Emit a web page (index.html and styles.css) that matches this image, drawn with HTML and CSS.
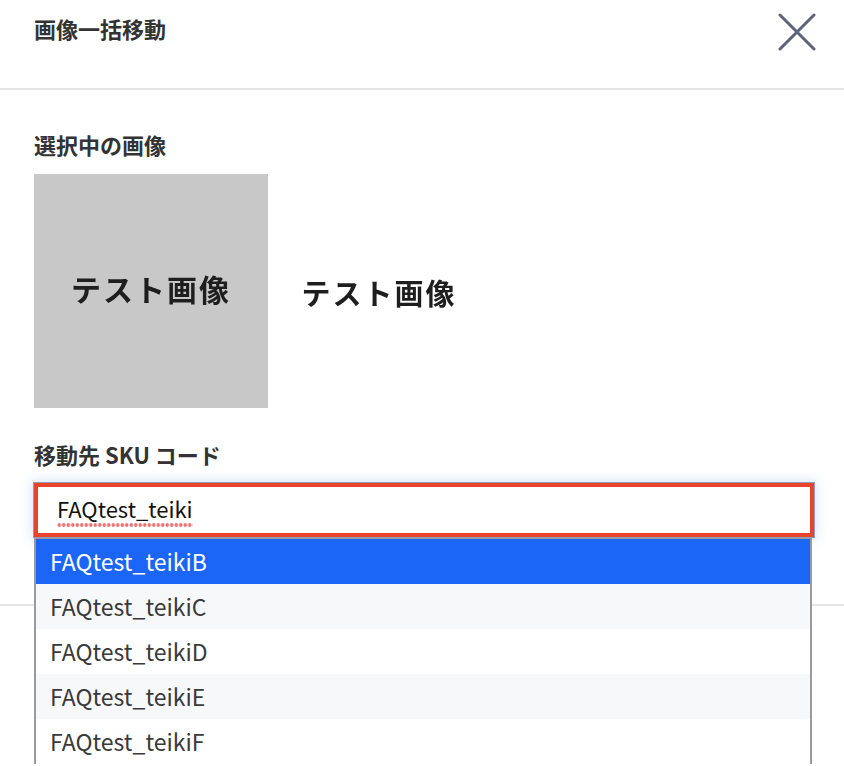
FILE: index.html
```html
<!DOCTYPE html>
<html lang="ja">
<head>
<meta charset="utf-8">
<title>画像一括移動</title>
<link rel="stylesheet" href="styles.css">
</head>
<body>
<div class="modal">
  <div class="modal-header">
    <h1 class="modal-title">画像一括移動</h1>
    <button class="close-btn" aria-label="閉じる">
      <svg width="38" height="38" viewBox="0 0 38 38"><path d="M2 2 L36 36 M36 2 L2 36" stroke="#5e6278" stroke-width="3" stroke-linecap="round" fill="none"/></svg>
    </button>
  </div>
  <div class="modal-body">
    <div class="field-label">選択中の画像</div>
    <div class="thumbs">
      <div class="thumb thumb-gray"><span class="thumb-text">テスト画像</span></div>
      <div class="thumb thumb-white"><span class="thumb-text">テスト画像</span></div>
    </div>
    <div class="field-label label-sku">移動先 SKU コード</div>
    <div class="combo">
      <div class="combo-input"><span class="typed">FAQtest_teiki</span></div>
      <ul class="combo-list">
        <li class="opt opt-active">FAQtest_teikiB</li>
        <li class="opt opt-alt">FAQtest_teikiC</li>
        <li class="opt">FAQtest_teikiD</li>
        <li class="opt opt-alt">FAQtest_teikiE</li>
        <li class="opt">FAQtest_teikiF</li>
      </ul>
    </div>
  </div>
  <div class="modal-footer"></div>
</div>
</body>
</html>
```
FILE: styles.css
```css
html, body {
  margin: 0;
  padding: 0;
  overflow: hidden;
  height: 100%;
  background: #fff;
}
body {
  font-family: "Noto Sans CJK JP", "Noto Sans", sans-serif;
  color: #333;
}
.modal {
  width: 844px;
}
.modal-header {
  box-sizing: border-box;
  height: 90px;
  padding: 12px 28px 0 34px;
  border-bottom: 2px solid #e6e6e6;
  display: flex;
  justify-content: space-between;
  align-items: flex-start;
}
.modal-title {
  margin: 0;
  font-size: 22px;
  line-height: 32px;
  font-weight: 700;
  color: #333;
}
.close-btn {
  margin: 0;
  padding: 0;
  border: 0;
  background: none;
  width: 38px;
  height: 38px;
  margin-top: 1px;
  display: block;
}
.close-btn svg { display: block; }
.modal-body {
  padding: 38px 30px 67px 34px;
}
.field-label {
  font-size: 22px;
  line-height: 32px;
  font-weight: 700;
  color: #333;
}
.thumbs {
  display: flex;
  margin-top: 14px;
}
.thumb {
  height: 234px;
  display: flex;
  align-items: center;
  justify-content: center;
}
.thumb-gray {
  width: 234px;
  background: #c8c8c8;
}
.thumb-white {
  width: 222px;
  background: #fff;
}
.thumb-text {
  font-size: 30px;
  font-weight: 700;
  color: #1e1e1e;
  letter-spacing: 2px;
  filter: blur(0.4px);
}
.thumb-gray .thumb-text { margin-top: -6px; }
.thumb-white .thumb-text { margin-top: 2px; font-size: 29px; }
.label-sku {
  margin-top: 30px;
}
.combo {
  position: relative;
  margin-top: 13px;
}
.combo-input {
  box-sizing: border-box;
  height: 54px;
  width: 780px;
  border: 4px solid #e8432b;
  outline: 1px solid #8f9db6;
  box-shadow: 0 0 10px 3px rgba(120, 160, 235, 0.25);
  padding-left: 19px;
  display: flex;
  align-items: center;
  background: #fff;
}
.typed {
  font-family: "Noto Sans CJK JP", "Noto Sans", sans-serif;
  font-size: 22px;
  color: #111;
  line-height: 30px;
  padding-bottom: 4px;
  background-image: radial-gradient(circle, #f07272 1.6px, transparent 2px);
  background-size: 4.5px 4px;
  background-repeat: repeat-x;
  background-position: 0 100%;
}
.combo-list {
  position: absolute;
  top: 55px;
  left: 0;
  width: 778px;
  box-sizing: border-box;
  margin: 0;
  padding: 0;
  list-style: none;
  border-left: 2px solid #9a9a9a;
  border-right: 2px solid #9a9a9a;
  border-top: 1px solid #9a9a9a;
  background: #fff;
}
.opt {
  height: 45px;
  line-height: 45px;
  padding-left: 14px;
  font-size: 23px;
  color: #3a3a3a;
  background: #fff;
}
.opt-alt { background: #f7f8fa; }
.opt-active {
  background: #1b66f6;
  color: #fff;
}
.modal-footer {
  border-top: 2px solid #e6e6e6;
  height: 200px;
}
```
